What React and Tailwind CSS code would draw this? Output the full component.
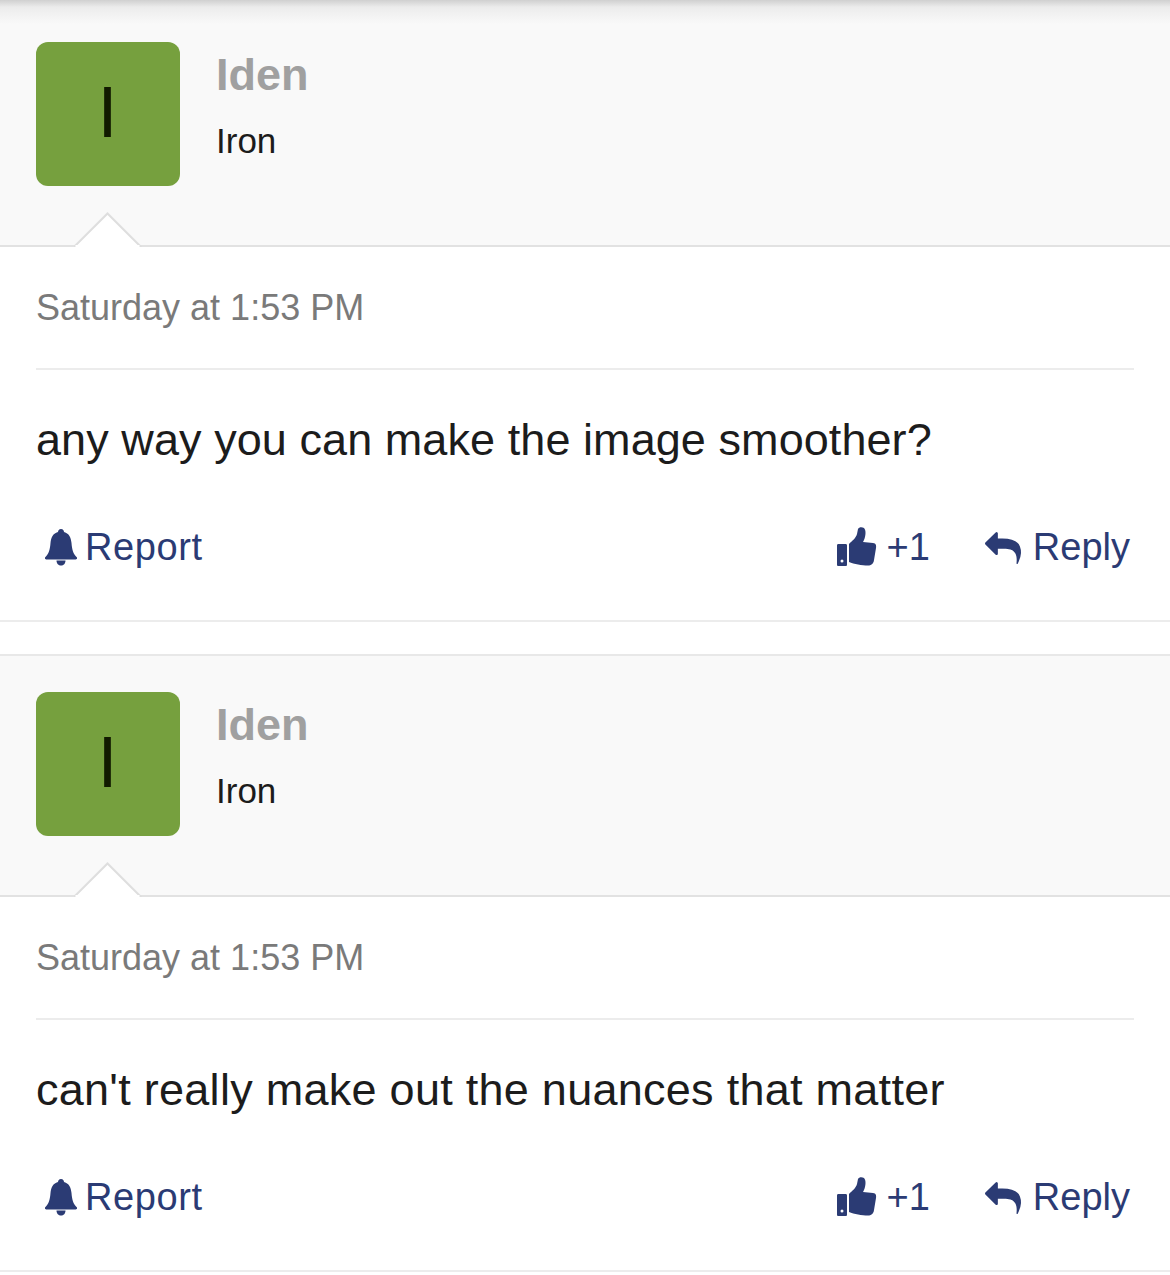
import React from "react";

const BellIcon = () => (
  <svg className="w-8 h-[37px]" viewBox="0 0 32 37" fill="currentColor">
    <path d="M16 0C18 0 19 1.5 19 3C24.5 4.5 26 9 26.5 14C27 20 28 25 32 28.5C32.5 30 31.5 30.5 30 30.5L2 30.5C0.5 30.5 -0.5 30 0 28.5C4 25 5 20 5.5 14C6 9 7.5 4.5 13 3C13 1.5 14 0 16 0Z" />
    <path d="M11.5 31.5H20.5C20.5 34.5 18.5 36.5 16 36.5C13.5 36.5 11.5 34.5 11.5 31.5Z" />
  </svg>
);

const ThumbIcon = () => (
  <svg className="w-10 h-10 ml-[1px] -mt-[2px]" viewBox="0 0 40 40" fill="currentColor">
    <path
      fillRule="evenodd"
      d="M1.5 17H8.5C9.5 17 10 17.5 10 18.5V37.5C10 38.5 9.5 39 8.5 39H1.5C0.5 39 0 38.5 0 37.5V18.5C0 17.5 0.5 17 1.5 17ZM5 32.5A1.5 1.5 0 1 0 5 35.5A1.5 1.5 0 1 0 5 32.5Z"
    />
    <path d="M12 17C15 14 19 11 20 7L21 2C22 0 25 0 27 1C29 3 29 8 27 13L26 15L36 16C39 16 39.5 19 39 21L37 33C36.5 37 34 38.5 31 38.5C25 38.5 17 37 12 35Z" />
  </svg>
);

const ReplyIcon = () => (
  <svg className="block w-9 h-8" viewBox="0 64 1792 1600" preserveAspectRatio="none" fill="currentColor">
    <path d="M1792 1120q0 166-127 451-3 7-10.5 24t-13.5 30-13 22q-12 17-28 17-15 0-23.5-10t-8.5-25q0-9 2.5-26.5t2.5-23.5q5-68 5-123 0-101-17.5-181t-48.5-138.5-80-101-105.5-69.5-133-42.5-154-21.5-175.5-6h-224v256q0 26-19 45t-45 19-45-19l-512-512q-19-19-19-45t19-45l512-512q19-19 45-19t45 19 19 45v256h224q713 0 875 403 53 134 53 333z" />
  </svg>
);

const Post = ({ text, first, spacing }) => (
  <div className={first ? "" : "border-t-2 border-[#e8e8e8]"}>
    {/* header */}
    <div
      className={`relative bg-[#f9f9f9] border-b-2 border-[#e2e2e2] flex gap-[37px] pl-9 ${
        first ? "pt-[42px] h-[247px]" : "pt-9 h-[241px]"
      }`}
    >
      {first && (
        <div className="absolute left-0 right-0 top-0 h-6 bg-gradient-to-b from-[#d0d0d0] via-[#ececec] via-30% to-[#f9f9f9]" />
      )}
      <div className="relative w-36 h-36 rounded-xl bg-[#76a03e] flex items-center justify-center text-[#111a00] text-[72px] leading-none pb-1 pr-[1px] font-['Liberation_Sans',sans-serif]">
        I
      </div>
      <div className="relative font-['Liberation_Sans',sans-serif]">
        <div className="text-[45px] leading-[50px] font-bold text-[#a0a0a0] mt-2 -ml-[1px]">Iden</div>
        <div className="text-[35px] leading-[40px] text-[#1c1c1c] mt-[21px] -ml-[1px]">Iron</div>
      </div>
      {/* caret */}
      <svg className="absolute left-[74px] bottom-[-2px] w-[68px] h-[35px]" viewBox="0 0 68 35">
        <path d="M0 35 L33.5 1.5 L67 35 Z" fill="#ffffff" stroke="#dedede" strokeWidth="2" />
        <rect x="1.5" y="33" width="64" height="2" fill="#ffffff" />
      </svg>
    </div>

    {/* body */}
    <div className="px-9 bg-white font-['Liberation_Sans',sans-serif]">
      <div className="h-[123px] border-b-2 border-[#ececec] pt-[38px] text-[36px] leading-[46px] text-[#7a7a7a]">
        Saturday at 1:53 PM
      </div>
      <div className={`pt-[44px] text-[45px] leading-[52px] text-[#1c1c1c] ${spacing}`}>{text}</div>
    </div>

    {/* actions */}
    <div className="flex items-center justify-between h-[71px] mt-[46px] mb-[37px] pl-[45px] pr-10 text-[#2b3b74] text-[38px] font-['Liberation_Sans',sans-serif]">
      <div className="flex items-center gap-2">
        <BellIcon />
        <span className="tracking-[0.6px]">Report</span>
      </div>
      <div className="flex items-center">
        <ThumbIcon />
        <span className="ml-[10px]">+1</span>
        <span className="ml-[55px]">
          <ReplyIcon />
        </span>
        <span className="ml-3">Reply</span>
      </div>
    </div>
    <div className="h-[2px] bg-[#ececec]" />
  </div>
);

export default function App() {
  return (
    <div className="w-[1170px] h-[1275px] bg-white overflow-hidden">
      <Post first spacing="tracking-[0.07px]" text="any way you can make the image smoother?" />
      <div className="h-8" />
      <Post spacing="tracking-[0.27px]" text="can't really make out the nuances that matter" />
    </div>
  );
}
